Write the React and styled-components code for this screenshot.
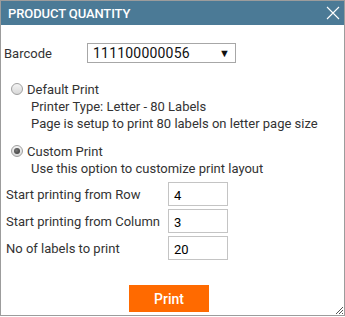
import React from "react";
import styled, { createGlobalStyle } from "styled-components";

const Global = createGlobalStyle`
  html, body { margin: 0; padding: 0; background: #fff; }
  body { font-family: Roboto, "Liberation Sans", Arial, sans-serif; }
  * { box-sizing: border-box; }
`;

const Dialog = styled.div`
  position: relative;
  width: 345px;
  height: 316px;
  border: 1px solid #9c9c9c;
  background: #fff;
  display: flex;
  flex-direction: column;
  color: #333;
  font-size: 13px;
`;

const TitleBar = styled.div`
  height: 24px;
  background: #4b7a96;
  display: flex;
  align-items: center;
  justify-content: space-between;
  padding: 0 4px 0 7px;
`;

const Title = styled.div`
  color: #fff;
  font-size: 13px;
  font-weight: 500;
  letter-spacing: -0.1px;
`;

const CloseBtn = styled.div`
  width: 14px;
  height: 14px;
  display: flex;
`;

const Body = styled.div`
  flex: 1;
  display: flex;
  flex-direction: column;
  padding: 18px 0 0 3px;
`;

const BarcodeRow = styled.div`
  display: flex;
  align-items: center;
  height: 20px;
`;

const BarcodeLabel = styled.div`
  width: 83px;
  font-size: 13px;
  color: #333;
`;

const Select = styled.div`
  width: 149px;
  height: 20px;
  border: 1px solid #a7a7a7;
  display: flex;
  align-items: center;
  justify-content: space-between;
  padding: 0 5px 0 5px;
  font-size: 14px;
  color: #111;
  letter-spacing: 0.2px;
`;

const Arrow = styled.span`
  font-size: 11px;
  color: #111;
`;

const OptionBlock = styled.div`
  display: flex;
  flex-direction: column;
  margin-top: ${(p) => p.$top}px;
  padding-left: 7px;
`;

const RadioLine = styled.div`
  display: flex;
  align-items: center;
  height: 16px;
  gap: 4px;
`;

const Radio = styled.span`
  width: 12px;
  height: 12px;
  border-radius: 50%;
  border: 1px solid #a0a0a0;
  background: linear-gradient(#f4f4f4, #d8d8d8);
  display: flex;
  align-items: center;
  justify-content: center;
  &::after {
    content: "";
    width: 6px;
    height: 6px;
    border-radius: 50%;
    background: ${(p) => (p.$checked ? "radial-gradient(circle at 40% 40%, #777, #333)" : "transparent")};
  }
`;

const RadioText = styled.span`
  font-size: 13px;
  color: #333;
`;

const Desc = styled.div`
  padding-left: 20px;
  font-size: 13px;
  line-height: 17px;
  color: #333;
  margin-top: ${(p) => p.$top || 0}px;
`;

const Fields = styled.div`
  display: flex;
  flex-direction: column;
  gap: 3px;
  margin-top: 5px;
`;

const FieldRow = styled.div`
  display: flex;
  align-items: center;
  padding-left: 2px;
`;

const FieldLabel = styled.div`
  width: 162px;
  font-size: 13px;
  color: #333;
`;

const Input = styled.div`
  width: 60px;
  height: 24px;
  border: 1px solid #c4c4c4;
  display: flex;
  align-items: center;
  padding: 2px 0 0 5px;
  font-size: 13px;
  color: #000;
`;

const Footer = styled.div`
  display: flex;
  padding-left: 125px;
  margin-top: 25px;
`;

const PrintButton = styled.div`
  width: 80px;
  height: 27px;
  background: #ff6a00;
  color: #fff;
  font-size: 14px;
  font-weight: 500;
  display: flex;
  align-items: center;
  justify-content: center;
`;

const Grip = styled.svg`
  position: absolute;
  right: 0;
  bottom: 0;
`;

export default function App() {
  return (
    <>
      <Global />
      <Dialog>
        <TitleBar>
          <Title>PRODUCT QUANTITY</Title>
          <CloseBtn>
            <svg width="14" height="14" viewBox="0 0 14 14">
              <path d="M1 1 L13 13 M13 1 L1 13" stroke="#fff" strokeWidth="1.1" />
            </svg>
          </CloseBtn>
        </TitleBar>
        <Body>
          <BarcodeRow>
            <BarcodeLabel>Barcode</BarcodeLabel>
            <Select>
              <span>111100000056</span>
              <Arrow>▼</Arrow>
            </Select>
          </BarcodeRow>
          <OptionBlock $top={18}>
            <RadioLine>
              <Radio />
              <RadioText>Default Print</RadioText>
            </RadioLine>
            <Desc $top={1}>Printer Type: Letter - 80 Labels</Desc>
            <Desc>Page is setup to print 80 labels on letter page size</Desc>
          </OptionBlock>
          <OptionBlock $top={11}>
            <RadioLine>
              <Radio $checked />
              <RadioText>Custom Print</RadioText>
            </RadioLine>
            <Desc $top={1}>Use this option to customize print layout</Desc>
          </OptionBlock>
          <Fields>
            <FieldRow>
              <FieldLabel>Start printing from Row</FieldLabel>
              <Input>4</Input>
            </FieldRow>
            <FieldRow>
              <FieldLabel>Start printing from Column</FieldLabel>
              <Input>3</Input>
            </FieldRow>
            <FieldRow>
              <FieldLabel>No of labels to print</FieldLabel>
              <Input>20</Input>
            </FieldRow>
          </Fields>
          <Footer>
            <PrintButton>Print</PrintButton>
          </Footer>
        </Body>
        <Grip width="10" height="10" viewBox="0 0 10 10">
          <path d="M9 2 L2 9 M9 5 L5 9 M9 8 L8 9" stroke="#555" strokeWidth="1" />
        </Grip>
      </Dialog>
    </>
  );
}
